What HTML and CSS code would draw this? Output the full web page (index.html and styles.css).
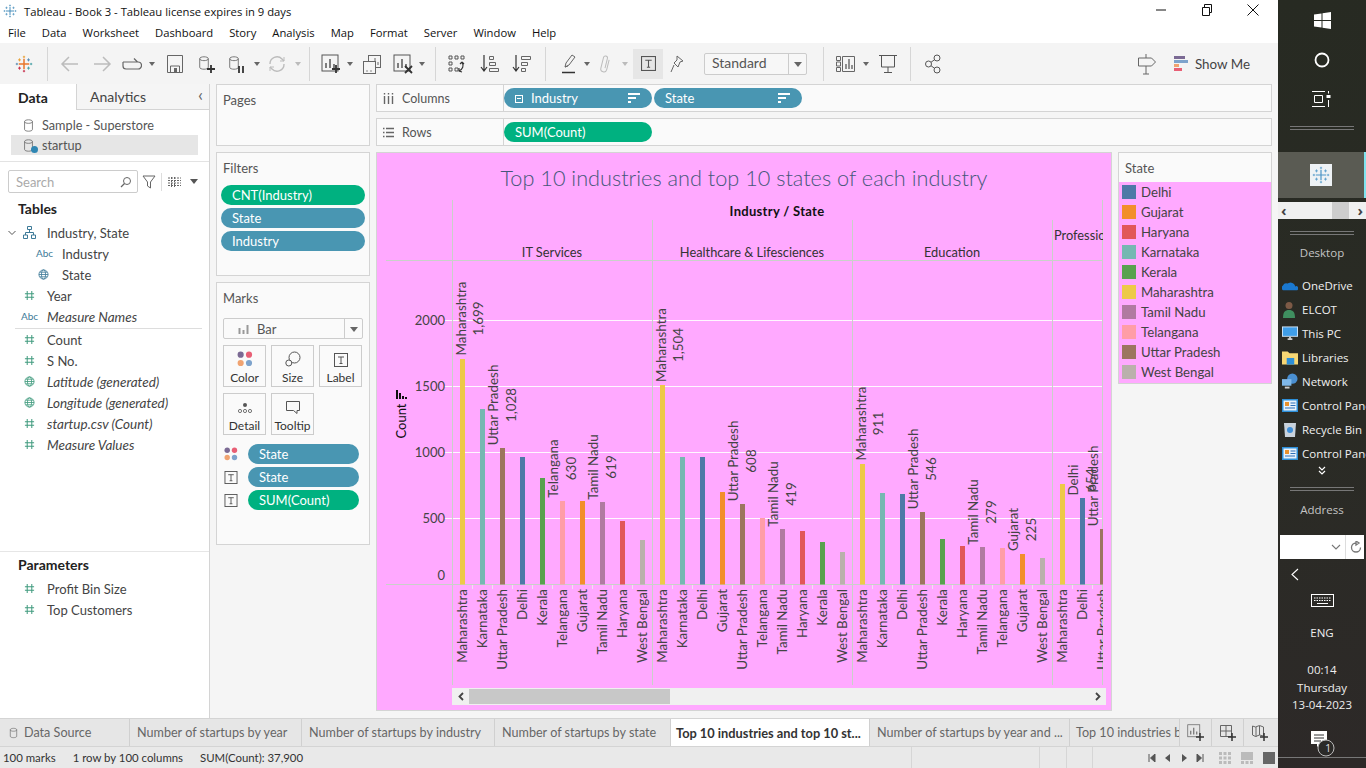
FILE: index.html
```html
<!DOCTYPE html>
<html lang="en">
<head>
<meta charset="utf-8">
<title>Tableau - Book 3</title>
<link rel="stylesheet" href="styles.css">
</head>
<body>
<svg class="defs" width="0" height="0" aria-hidden="true">
  <symbol id="i-db" viewBox="0 0 14 18"><path d="M2 4v10c0 3 10 3 10 0V4M2 4c0-3 10-3 10 0s-10 3-10 0" fill="none" stroke="currentColor"/></symbol>
  <symbol id="i-hash" viewBox="0 0 12 12"><path d="M3.5 1v10M8.5 1v10M1 4h10M1 8h10" fill="none" stroke="#3f9a7d" stroke-width="1.1"/></symbol>
  <symbol id="i-globe" viewBox="0 0 12 12"><g fill="none" stroke="currentColor" stroke-width=".9"><circle cx="6" cy="6" r="5"/><ellipse cx="6" cy="6" rx="2.2" ry="5"/><path d="M1 6h10M1.8 3.5h8.4M1.8 8.5h8.4"/></g></symbol>
  <symbol id="i-t" viewBox="0 0 14 14"><rect x=".5" y=".5" width="13" height="13" fill="none" stroke="#555"/><path d="M4 4h6M7 4v6.500M5.500 10.500h3" fill="none" stroke="#555"/></symbol>
  <symbol id="i-dots" viewBox="0 0 14 14"><circle cx="3.200" cy="3.200" r="2.700" fill="#7b6a94"/><circle cx="10.500" cy="3.200" r="2.700" fill="#e85f75"/><circle cx="3.200" cy="10.500" r="2.700" fill="#f0a371"/><circle cx="10.500" cy="10.500" r="2.700" fill="#7ea3cc"/></symbol>
  <symbol id="i-sort" viewBox="0 0 12 10"><path d="M0 1h12M0 5h8M0 9h3" fill="none" stroke="#fff" stroke-width="2"/></symbol>
  <symbol id="i-plus-mark" viewBox="0 0 24 24"><path d="M12 5v14M5 12h14" stroke="currentColor" stroke-width="1.600"/><path d="M12 1v3M10.500 2.500h3M12 20v3M10.500 21.500h3M1 12h3M2.500 10.500v3M20 12h3M21.500 10.500v3M6 4.500v4M4 6.500h4M18 4.500v4M16 6.500h4M6 15.500v4M4 17.500h4M18 15.500v4M16 17.500h4" stroke="currentColor" stroke-width="1"/></symbol>
  <symbol id="i-logo" viewBox="0 0 24 24"><path d="M12 5v14M5 12h14" stroke="#e8762b" stroke-width="2"/><path d="M12 1v3M10.500 2.500h3M6 4.500v4M4 6.500h4" stroke="#e8a33a" stroke-width="1.300"/><path d="M18 4.500v4M16 6.500h4M1 12h3M2.500 10.500v3" stroke="#5b8fb5" stroke-width="1.300"/><path d="M20 12h3M21.500 10.500v3M18 15.500v4M16 17.500h4" stroke="#4aa3a8" stroke-width="1.300"/><path d="M6 15.500v4M4 17.500h4M12 20v3M10.500 21.500h3" stroke="#c8324f" stroke-width="1.300"/></symbol>
  <symbol id="i-bars" viewBox="0 0 20 20"><rect x="1" y="1" width="16" height="16" fill="none" stroke="currentColor"/><path d="M5 14V9M9 14V5M13 14v-4" stroke="currentColor" stroke-width="1.500"/></symbol>
</svg>

<div class="screen">
<div class="app">
  <header class="titlebar">
    <svg class="title-logo" width="14" height="14"><use href="#i-plus-mark" color="#3d88b8"/></svg>
    <span class="title-text">Tableau - Book 3 - Tableau license expires in 9 days</span>
    <div class="win-controls">
      <svg width="12" height="12" viewBox="0 0 12 12"><path d="M1 6h10" stroke="#111"/></svg>
      <svg width="12" height="12" viewBox="0 0 12 12"><path d="M1.500 3.500h7v8h-7zM3.500 3.500v-3h7v8h-2" fill="none" stroke="#111"/></svg>
      <svg width="12" height="12" viewBox="0 0 12 12"><path d="M.5.500l11 11M11.500.500l-11 11" stroke="#111"/></svg>
    </div>
  </header>
  <nav class="menubar">
    <span>File</span><span>Data</span><span>Worksheet</span><span>Dashboard</span><span>Story</span><span>Analysis</span><span>Map</span><span>Format</span><span>Server</span><span>Window</span><span>Help</span>
  </nav>
  <div class="toolbar">
    <div class="tool w47"><svg width="18" height="18"><use href="#i-logo"/></svg></div>
    <i class="sep"></i>
    <div class="tool w32 lead6 off"><svg width="20" height="20" viewBox="0 0 20 20"><path d="M18 10H3M9 3l-7 7 7 7" fill="none" stroke="currentColor" stroke-width="1.500"/></svg></div>
    <div class="tool w32 off"><svg width="20" height="20" viewBox="0 0 20 20"><path d="M2 10h15M11 3l7 7-7 7" fill="none" stroke="currentColor" stroke-width="1.500"/></svg></div>
    <div class="tool w28"><svg width="20" height="14" viewBox="0 0 20 14"><path d="M1 5h14M12 1.500l3.500 3.500-3.500 0M1 5v4a3 3 0 0 0 3 3h12a3.500 3.500 0 0 0 0-7" fill="none" stroke="#666" stroke-width="1.200"/></svg></div>
    <div class="tool w12 caret"></div>
    <div class="tool w32 lead1"><svg width="16" height="18" viewBox="0 0 16 18"><path d="M.5.500h15v17H.5zM3.500 17v-6h9v6" fill="none" stroke="#666"/><rect x="7" y="13" width="3" height="4" fill="#666"/></svg></div>
    <div class="tool w32"><svg width="18" height="20" viewBox="0 0 18 20"><use href="#i-db" width="12" height="16" x="0" y="1" color="#666"/><path d="M13 11v8M9 15h8" stroke="#333" stroke-width="1.800"/></svg></div>
    <div class="tool w28"><svg width="18" height="20" viewBox="0 0 18 20"><use href="#i-db" width="12" height="16" x="0" y="1" color="#666"/><path d="M11 12v7M15 12v7" stroke="#333" stroke-width="1.800"/></svg></div>
    <div class="tool w12 caret"></div>
    <div class="tool w28 off"><svg width="18" height="18" viewBox="0 0 18 18"><path d="M2 9a7 7 0 0 1 12-5l2 2M16 9a7 7 0 0 1-12 5l-2-2" fill="none" stroke="currentColor" stroke-width="1.400"/><path d="M16 2v4h-4M2 16v-4h4" fill="none" stroke="currentColor"/></svg></div>
    <div class="tool w14 caret off-caret"></div>
    <i class="sep gap4"></i>
    <div class="tool w30 lead6"><svg width="20" height="20"><use href="#i-bars" color="#555"/><path d="M15 11v8M11 15h8" stroke="#333" stroke-width="1.800"/></svg></div>
    <div class="tool w8 caret"></div>
    <div class="tool w36"><svg width="20" height="20" viewBox="0 0 20 20"><rect x="6.500" y="1.500" width="12" height="12" fill="#f5f5f5" stroke="#666"/><path d="M10 11V7M13 11V4M16 11V8" stroke="#666"/><rect x="1.500" y="7.500" width="12" height="12" fill="#f5f5f5" stroke="#666"/><path d="M4 17h2M8 17h2" stroke="#888"/></svg></div>
    <div class="tool w26"><svg width="20" height="20"><use href="#i-bars" color="#555"/><path d="M12 12l7 7M19 12l-7 7" stroke="#333" stroke-width="1.800"/></svg></div>
    <div class="tool w12 caret"></div>
    <i class="sep gap7"></i>
    <div class="tool w32 lead5"><svg width="20" height="20" viewBox="0 0 20 20"><path d="M2 2h3v3H2zM8 2h3v3H8zM14 2h3v3h-3zM2 8h3v3H2zM2 14h3v3H2zM8 14h3v3H8z" fill="none" stroke="#555"/><path d="M15 8c2 4 1 7-3 9M12 14l0 3 3 1M15 8l-2 2M15 8l2 2" fill="none" stroke="#333" stroke-width="1.100"/></svg></div>
    <div class="tool w32 lead1"><svg width="20" height="20" viewBox="0 0 20 20"><path d="M4 1v15M1 13l3 4 3-4" fill="none" stroke="#333" stroke-width="1.200"/><path d="M9.500 2.500h4v3h-4zM9.500 8.500h6v3h-6zM9.500 14.500h9v3h-9z" fill="none" stroke="#666"/></svg></div>
    <div class="tool w32"><svg width="20" height="20" viewBox="0 0 20 20"><path d="M4 1v15M1 13l3 4 3-4" fill="none" stroke="#333" stroke-width="1.200"/><path d="M9.500 2.500h9v3h-9zM9.500 8.500h6v3h-6zM9.500 14.500h4v3h-4z" fill="none" stroke="#666"/></svg></div>
    <i class="sep gap7"></i>
    <div class="tool w28 lead9"><svg width="18" height="20" viewBox="0 0 18 20"><path d="M5 13l1-4 6-8 3 2-6 8zM5 13l3-1" fill="none" stroke="#666"/><path d="M2 18.500h13" stroke="#333" stroke-width="1.500"/></svg></div>
    <div class="tool w8 caret"></div>
    <div class="tool w26 lead1 off"><svg width="12" height="20" viewBox="0 0 12 20"><path d="M9 5v10a3 3 0 0 1-6 0V4a2 2 0 0 1 4 0v10" fill="none" stroke="currentColor" transform="rotate(14 6 10)"/></svg></div>
    <div class="tool w14 caret off-caret"></div>
    <div class="tool t-active"><svg width="15" height="15"><use href="#i-t"/></svg></div>
    <div class="tool w28"><svg width="14" height="18" viewBox="0 0 14 18"><path d="M7 1l6 5-3 1-2 5-4-4 3-3zM4 10l-3 7" fill="none" stroke="#666"/></svg></div>
    <div class="select std"><span>Standard</span><b></b></div>
    <i class="sep gap16"></i>
    <div class="tool w32 lead6"><svg width="20" height="18" viewBox="0 0 20 18"><path d="M.5 1.500h4v4h-4zM.5 7h4v4h-4zM.5 12.500h4v4h-4zM6.500 1.500h12v15h-12z" fill="none" stroke="#666"/><path d="M10 14V9M13 14V4M16 14v-4" stroke="#666" stroke-width="1.400"/></svg></div>
    <div class="tool w8 caret"></div>
    <div class="tool w36"><svg width="18" height="20" viewBox="0 0 18 20"><path d="M0 1.500h18M2.500 2v11h13V2M9 13v5M5 18.500h8" fill="none" stroke="#555"/></svg></div>
    <i class="sep gap4"></i>
    <div class="tool w32 lead6"><svg width="16" height="20" viewBox="0 0 16 20"><g fill="none" stroke="#555"><circle cx="3.500" cy="10" r="3"/><circle cx="12" cy="4" r="3"/><circle cx="12" cy="16" r="3"/><path d="M6 8.300l3.500-2.600M6 11.700l3.500 2.600"/></g></svg></div>
    <div class="tool-right">
      <svg width="18" height="22" viewBox="0 0 18 22"><path d="M.5 5h13l4 4-4 4H.5zM8 1v4M8 13v8M5 21h6" fill="none" stroke="#666"/></svg>
      <div class="showme">
        <svg width="14" height="16" viewBox="0 0 14 16"><rect width="11" height="3" fill="#7b6a94"/><rect y="4" width="14" height="3" fill="#7ea3cc"/><rect y="8" width="5" height="3" fill="#f0a371"/><rect y="12" width="8" height="3" fill="#e85f75"/></svg>
        <span>Show Me</span>
      </div>
    </div>
  </div>

  <main class="main">
    <aside class="sidebar">
      <div class="side-tabs">
        <div class="side-tab on">Data</div>
        <div class="side-tab">Analytics<span class="chev">&#8249;</span></div>
      </div>
      <div class="sources">
        <div class="source"><svg width="11" height="15"><use href="#i-db" color="#666"/></svg><span>Sample - Superstore</span></div>
        <div class="source on"><svg width="11" height="15"><use href="#i-db" color="#666"/></svg><i class="check"></i><span>startup</span></div>
      </div>
      <div class="search-row">
        <div class="search"><span>Search</span><svg width="12" height="12" viewBox="0 0 12 12"><circle cx="7" cy="5" r="3.500" fill="none" stroke="#666"/><path d="M4.500 7.500L1 11" stroke="#666" stroke-width="1.200"/></svg></div>
        <svg class="funnel" width="14" height="14" viewBox="0 0 14 14"><path d="M1 1h12L8.500 7v6l-3-2V7z" fill="none" stroke="#666"/></svg>
        <i class="search-sep"></i>
        <svg class="listic" width="13" height="10" viewBox="0 0 13 10"><path d="M0 1h13M0 3.500h13M0 6h13M0 8.500h13M3.500 0v10M6.500 0v10" stroke="#666" stroke-dasharray="2 1"/></svg>
        <i class="caret-d"></i>
      </div>
      <h3 class="side-head">Tables</h3>
      <div class="field top"><svg class="fold" width="8" height="6" viewBox="0 0 8 6"><path d="M.5 1L4 4.500 7.500 1" fill="none" stroke="#555"/></svg><svg class="f-ic" width="13" height="13" viewBox="0 0 13 13"><path d="M4.500.500h4v3h-4zM.500 9h4v3.500h-4zM8.500 9h4v3.500h-4zM6.500 3.500V6.500M2.500 9V6.500h8V9" fill="none" stroke="#3d7a98"/></svg><span>Industry, State</span></div>
      <div class="field sub"><span class="abc">Abc</span><span>Industry</span></div>
      <div class="field sub"><svg class="f-ic globe-b" width="11" height="11"><use href="#i-globe"/></svg><span>State</span></div>
      <div class="field"><svg class="f-ic" width="11" height="11"><use href="#i-hash"/></svg><span>Year</span></div>
      <div class="field em"><span class="abc">Abc</span><span>Measure Names</span></div>
      <div class="divider"></div>
      <div class="field"><svg class="f-ic" width="11" height="11"><use href="#i-hash"/></svg><span>Count</span></div>
      <div class="field"><svg class="f-ic" width="11" height="11"><use href="#i-hash"/></svg><span>S No.</span></div>
      <div class="field em"><svg class="f-ic globe-g" width="11" height="11"><use href="#i-globe"/></svg><span>Latitude (generated)</span></div>
      <div class="field em"><svg class="f-ic globe-g" width="11" height="11"><use href="#i-globe"/></svg><span>Longitude (generated)</span></div>
      <div class="field em"><svg class="f-ic" width="11" height="11"><use href="#i-hash"/></svg><span>startup.csv (Count)</span></div>
      <div class="field em"><svg class="f-ic" width="11" height="11"><use href="#i-hash"/></svg><span>Measure Values</span></div>
      <div class="params">
        <h3 class="side-head">Parameters</h3>
        <div class="field"><svg class="f-ic" width="11" height="11"><use href="#i-hash"/></svg><span>Profit Bin Size</span></div>
        <div class="field"><svg class="f-ic" width="11" height="11"><use href="#i-hash"/></svg><span>Top Customers</span></div>
      </div>
    </aside>

    <div class="cards">
      <section class="card pages"><h4>Pages</h4></section>
      <section class="card filters">
        <h4>Filters</h4>
        <div class="pill green">CNT(Industry)</div>
        <div class="pill blue">State</div>
        <div class="pill blue">Industry</div>
      </section>
      <section class="card marks">
        <h4>Marks</h4>
        <div class="select mark-type"><svg width="12" height="10" viewBox="0 0 12 10"><path d="M1.500 4v6M5.500 6v4M9.500 1v9" stroke="#999" stroke-width="2"/></svg><span>Bar</span><b></b></div>
        <div class="mark-grid">
          <div class="mark-btn"><svg width="16" height="16"><use href="#i-dots"/></svg><span>Color</span></div>
          <div class="mark-btn"><svg width="16" height="16" viewBox="0 0 16 16"><circle cx="9.500" cy="6.500" r="5.500" fill="none" stroke="#555"/><circle cx="3.800" cy="12" r="3" fill="#fafafa" stroke="#555"/></svg><span>Size</span></div>
          <div class="mark-btn"><svg width="14" height="14"><use href="#i-t"/></svg><span>Label</span></div>
          <div class="mark-btn"><svg width="16" height="14" viewBox="0 0 16 14"><circle cx="8" cy="4" r="2" fill="#555"/><g fill="none" stroke="#555" stroke-width=".8"><circle cx="3" cy="10" r="1.600"/><circle cx="8" cy="10" r="1.600"/><circle cx="13" cy="10" r="1.600"/></g></svg><span>Detail</span></div>
          <div class="mark-btn"><svg width="16" height="14" viewBox="0 0 16 14"><path d="M1.500.500h13v9H12v3l-3.500-3h-7z" fill="none" stroke="#555"/></svg><span>Tooltip</span></div>
        </div>
        <div class="mark-pill"><svg width="14" height="14"><use href="#i-dots"/></svg><div class="pill blue">State</div></div>
        <div class="mark-pill"><svg width="13" height="13"><use href="#i-t"/></svg><div class="pill blue">State</div></div>
        <div class="mark-pill"><svg width="13" height="13"><use href="#i-t"/></svg><div class="pill green">SUM(Count)</div></div>
      </section>
    </div>

    <div class="content">
      <div class="shelf">
        <div class="shelf-label"><svg width="11" height="11" viewBox="0 0 11 11"><path d="M1.500 3v8M5.500 3v8M9.500 3v8M1.500 0v1.500M5.500 0v1.500M9.500 0v1.500" stroke="#666" stroke-width="1.400"/></svg><span>Columns</span></div>
        <div class="pill blue shelf-pill"><i class="minus"></i>Industry<svg class="sorter" width="12" height="10"><use href="#i-sort"/></svg></div>
        <div class="pill blue shelf-pill">State<svg class="sorter" width="12" height="10"><use href="#i-sort"/></svg></div>
      </div>
      <div class="shelf">
        <div class="shelf-label"><svg width="11" height="11" viewBox="0 0 11 11"><path d="M0 1.500h1.500M3 1.500h8M0 5.500h1.500M3 5.500h8M0 9.500h1.500M3 9.500h8" stroke="#666" stroke-width="1.400"/></svg><span>Rows</span></div>
        <div class="pill green shelf-pill">SUM(Count)</div>
      </div>
      <div class="stage">
        <div class="view">
          <svg class="chart" width="736" height="559" viewBox="376 152 736 559">
            <defs><clipPath id="pane"><rect x="376" y="152" width="727" height="533"/></clipPath></defs>
            <text class="c-title" x="744" y="186">Top 10 industries and top 10 states of each industry</text>
            <g class="grid">
              <path d="M444 320.500h659M444 386.500h659M444 452.500h659M444 518.500h659"/>
            </g>
            <g class="rules">
              <path d="M386 260.500h717M386 584.500h717M452.500 200v485M1102.500 200v485M652.500 220v465M852.500 220v465M1052.500 220v465"/>
              <path class="ticks" d="M472.500 585v4M492.500 585v4M512.500 585v4M532.500 585v4M552.500 585v4M572.500 585v4M592.500 585v4M612.500 585v4M632.500 585v4M672.500 585v4M692.500 585v4M712.500 585v4M732.500 585v4M752.500 585v4M772.500 585v4M792.500 585v4M812.500 585v4M832.500 585v4M872.500 585v4M892.500 585v4M912.500 585v4M932.500 585v4M952.500 585v4M972.500 585v4M992.500 585v4M1012.500 585v4M1032.500 585v4M1072.500 585v4M1092.500 585v4"/>
            </g>
            <text class="c-head b" x="777" y="216">Industry / State</text>
            <text class="c-head" x="552" y="257">IT Services</text>
            <text class="c-head" x="752" y="257">Healthcare &amp; Lifesciences</text>
            <text class="c-head" x="952" y="257">Education</text>
            <g clip-path="url(#pane)"><text class="c-head start" x="1054" y="240">Professional &amp; Commercial Services</text></g>

            <text class="c-tick" x="445" y="325">2000</text>
            <text class="c-tick" x="445" y="391">1500</text>
            <text class="c-tick" x="445" y="457">1000</text>
            <text class="c-tick" x="445" y="523">500</text>
            <text class="c-tick" x="445" y="580">0</text>
            <text class="c-axis" transform="translate(406,421) rotate(-90)">Count</text>
            <path class="c-sort" d="M397 390v9M400 393v6M403 396v3M406 397v2"/>

            <g class="bars">
              <rect class="mh" x="460" y="359" width="5" height="225.500"/><rect class="ka" x="480" y="409" width="5" height="175.500"/><rect class="up" x="500" y="448" width="5" height="136.500"/><rect class="dl" x="520" y="457" width="5" height="127.500"/><rect class="kl" x="540" y="478" width="5" height="106.500"/><rect class="tg" x="560" y="501" width="5" height="83.500"/><rect class="gj" x="580" y="501" width="5" height="83.500"/><rect class="tn" x="600" y="502" width="5" height="82.500"/><rect class="hr" x="620" y="521" width="5" height="63.500"/><rect class="wb" x="640" y="540" width="5" height="44.500"/>
              <rect class="mh" x="660" y="385" width="5" height="199.500"/><rect class="ka" x="680" y="457" width="5" height="127.500"/><rect class="dl" x="700" y="457" width="5" height="127.500"/><rect class="gj" x="720" y="492" width="5" height="92.500"/><rect class="up" x="740" y="504" width="5" height="80.500"/><rect class="tg" x="760" y="518" width="5" height="66.500"/><rect class="tn" x="780" y="529" width="5" height="55.500"/><rect class="hr" x="800" y="531" width="5" height="53.500"/><rect class="kl" x="820" y="542" width="5" height="42.500"/><rect class="wb" x="840" y="552" width="5" height="32.500"/>
              <rect class="mh" x="860" y="464" width="5" height="120.500"/><rect class="ka" x="880" y="493" width="5" height="91.500"/><rect class="dl" x="900" y="494" width="5" height="90.500"/><rect class="up" x="920" y="512" width="5" height="72.500"/><rect class="kl" x="940" y="539" width="5" height="45.500"/><rect class="hr" x="960" y="546" width="5" height="38.500"/><rect class="tn" x="980" y="547" width="5" height="37.500"/><rect class="tg" x="1000" y="548" width="5" height="36.500"/><rect class="gj" x="1020" y="554" width="5" height="30.500"/><rect class="wb" x="1040" y="558" width="5" height="26.500"/>
              <rect class="mh" x="1060" y="484" width="5" height="100.500"/><rect class="dl" x="1080" y="498" width="5" height="86.500"/><rect class="up" x="1100" y="529" width="3" height="55.500"/>
            </g>

            <g class="c-lab" clip-path="url(#pane)">
              <text transform="translate(465.500,318.500) rotate(-90)">Maharashtra</text><text transform="translate(482.500,318.500) rotate(-90)">1,699</text>
              <text transform="translate(498,405) rotate(-90)">Uttar Pradesh</text><text transform="translate(515.500,405) rotate(-90)">1,028</text>
              <text transform="translate(558,468.500) rotate(-90)">Telangana</text><text transform="translate(575.500,468.500) rotate(-90)">630</text>
              <text transform="translate(598,467) rotate(-90)">Tamil Nadu</text><text transform="translate(615.500,467) rotate(-90)">619</text>
              <text transform="translate(665.500,345) rotate(-90)">Maharashtra</text><text transform="translate(682.500,345) rotate(-90)">1,504</text>
              <text transform="translate(738,461) rotate(-90)">Uttar Pradesh</text><text transform="translate(755.500,461) rotate(-90)">608</text>
              <text transform="translate(778,494) rotate(-90)">Tamil Nadu</text><text transform="translate(795.500,494) rotate(-90)">419</text>
              <text transform="translate(865.500,423.500) rotate(-90)">Maharashtra</text><text transform="translate(882.500,423.500) rotate(-90)">911</text>
              <text transform="translate(918,469) rotate(-90)">Uttar Pradesh</text><text transform="translate(935.500,469) rotate(-90)">546</text>
              <text transform="translate(978,512) rotate(-90)">Tamil Nadu</text><text transform="translate(995.500,512) rotate(-90)">279</text>
              <text transform="translate(1018,529.500) rotate(-90)">Gujarat</text><text transform="translate(1035.500,529.500) rotate(-90)">225</text>
              <text transform="translate(1078,480) rotate(-90)">Delhi</text><text transform="translate(1095.500,480) rotate(-90)">654</text>
              <text transform="translate(1098,486) rotate(-90)">Uttar Pradesh</text>
            </g>

            <g class="c-cat" clip-path="url(#pane)">
              <text transform="translate(466.500,589) rotate(-90)">Maharashtra</text><text transform="translate(486.500,589) rotate(-90)">Karnataka</text><text transform="translate(506.500,589) rotate(-90)">Uttar Pradesh</text><text transform="translate(526.500,589) rotate(-90)">Delhi</text><text transform="translate(546.500,589) rotate(-90)">Kerala</text><text transform="translate(566.500,589) rotate(-90)">Telangana</text><text transform="translate(586.500,589) rotate(-90)">Gujarat</text><text transform="translate(606.500,589) rotate(-90)">Tamil Nadu</text><text transform="translate(626.500,589) rotate(-90)">Haryana</text><text transform="translate(646.500,589) rotate(-90)">West Bengal</text>
              <text transform="translate(666.500,589) rotate(-90)">Maharashtra</text><text transform="translate(686.500,589) rotate(-90)">Karnataka</text><text transform="translate(706.500,589) rotate(-90)">Delhi</text><text transform="translate(726.500,589) rotate(-90)">Gujarat</text><text transform="translate(746.500,589) rotate(-90)">Uttar Pradesh</text><text transform="translate(766.500,589) rotate(-90)">Telangana</text><text transform="translate(786.500,589) rotate(-90)">Tamil Nadu</text><text transform="translate(806.500,589) rotate(-90)">Haryana</text><text transform="translate(826.500,589) rotate(-90)">Kerala</text><text transform="translate(846.500,589) rotate(-90)">West Bengal</text>
              <text transform="translate(866.500,589) rotate(-90)">Maharashtra</text><text transform="translate(886.500,589) rotate(-90)">Karnataka</text><text transform="translate(906.500,589) rotate(-90)">Delhi</text><text transform="translate(926.500,589) rotate(-90)">Uttar Pradesh</text><text transform="translate(946.500,589) rotate(-90)">Kerala</text><text transform="translate(966.500,589) rotate(-90)">Haryana</text><text transform="translate(986.500,589) rotate(-90)">Tamil Nadu</text><text transform="translate(1006.500,589) rotate(-90)">Telangana</text><text transform="translate(1026.500,589) rotate(-90)">Gujarat</text><text transform="translate(1046.500,589) rotate(-90)">West Bengal</text>
              <text transform="translate(1066.500,589) rotate(-90)">Maharashtra</text><text transform="translate(1086.500,589) rotate(-90)">Delhi</text><text transform="translate(1106.500,589) rotate(-90)">Uttar Pradesh</text>
            </g>

            <rect class="sb-track" x="452" y="688" width="654" height="17"/>
            <rect class="sb-thumb" x="469" y="689" width="201" height="15"/>
            <path class="sb-arrow" d="M463 693l-3.500 3.500 3.500 3.500M1096 693l3.500 3.500-3.500 3.500"/>
          </svg>
        </div>
        <div class="legend">
          <div class="legend-head">State</div>
          <ul class="legend-list">
            <li><i class="sw dl-bg"></i>Delhi</li>
            <li><i class="sw gj-bg"></i>Gujarat</li>
            <li><i class="sw hr-bg"></i>Haryana</li>
            <li><i class="sw ka-bg"></i>Karnataka</li>
            <li><i class="sw kl-bg"></i>Kerala</li>
            <li><i class="sw mh-bg"></i>Maharashtra</li>
            <li><i class="sw tn-bg"></i>Tamil Nadu</li>
            <li><i class="sw tg-bg"></i>Telangana</li>
            <li><i class="sw up-bg"></i>Uttar Pradesh</li>
            <li><i class="sw wb-bg"></i>West Bengal</li>
          </ul>
        </div>
      </div>
    </div>
  </main>

  <div class="tabbar">
    <div class="tab ds"><svg width="9" height="12"><use href="#i-db" color="#666"/></svg>Data Source</div>
    <div class="tab t172">Number of startups by year</div>
    <div class="tab t193">Number of startups by industry</div>
    <div class="tab t176">Number of startups by state</div>
    <div class="tab t199 active">Top 10 industries and top 10 st...</div>
    <div class="tab t200">Number of startups by year and ...</div>
    <div class="tab t110">Top 10 industries by year and state</div>
    <div class="tab-add"><svg width="18" height="18"><use href="#i-bars" color="#666" width="15" height="15"/><path d="M13 9v8M9 13h8" stroke="#333" stroke-width="1.500"/></svg></div>
    <div class="tab-add"><svg width="18" height="18" viewBox="0 0 18 18"><path d="M1.500 1.500h11v11h-11zM7 1.500v11M1.500 7h11" fill="none" stroke="#666"/><path d="M13 9v8M9 13h8" stroke="#333" stroke-width="1.500"/></svg></div>
    <div class="tab-add"><svg width="18" height="18" viewBox="0 0 18 18"><path d="M1.500 2l3 1 4-1.500 4 1.500v9l-4-1-4 1.500-3-1.500zM5 3v10M8.500 2v9" fill="none" stroke="#666"/><path d="M13 9v8M9 13h8" stroke="#333" stroke-width="1.500"/></svg></div>
  </div>
  <footer class="statusbar">
    <span class="st-a">100 marks</span><span class="st-b">1 row by 100 columns</span><span class="st-c">SUM(Count): 37,900</span>
    <div class="st-cells"><i class="c1"></i><i class="c2"></i><i class="c3"></i><i class="c4"></i></div>
    <div class="st-nav">
      <svg width="8" height="8" viewBox="0 0 8 8"><path d="M1 0v8M7 0v8L2.500 4z" stroke="#555" fill="#555"/></svg>
      <svg width="8" height="8" viewBox="0 0 8 8"><path d="M6 0v8L1 4z" fill="#555"/></svg>
      <svg width="8" height="8" viewBox="0 0 8 8"><path d="M2 0v8l5-4z" fill="#555"/></svg>
      <svg width="8" height="8" viewBox="0 0 8 8"><path d="M7 0v8M1 0v8l4.500-4z" stroke="#555" fill="#555"/></svg>
    </div>
    <div class="st-view">
      <svg width="12" height="12" viewBox="0 0 12 12"><path d="M0 1.500h12M0 6h12M0 10.500h12" stroke="#bbb" stroke-width="3" stroke-dasharray="3 1.500"/></svg>
      <svg width="12" height="12" viewBox="0 0 12 12"><rect width="12" height="8" fill="#bbb"/><path d="M0 10.500h12" stroke="#bbb" stroke-width="3" stroke-dasharray="3 1.500"/></svg>
      <svg width="12" height="12" viewBox="0 0 12 12"><rect width="12" height="12" fill="#666"/></svg>
    </div>
  </footer>
</div>

<aside class="taskbar">
  <div class="tk-slot s40"><svg width="17" height="17" viewBox="0 0 17 17"><path d="M0 2.500l7.500-1v6.500H0zM8.500 1.300L17 0v8H8.500zM0 9h7.500v6.500l-7.500-1zM8.500 9H17v8l-8.500-1.300z" fill="#fff"/></svg></div>
  <div class="tk-slot s40"><svg width="16" height="16" viewBox="0 0 16 16"><circle cx="8" cy="8" r="6.500" fill="none" stroke="#fff" stroke-width="1.800"/></svg></div>
  <div class="tk-slot s38"><svg width="20" height="16" viewBox="0 0 20 16"><path d="M0 .500h13M0 15.500h13M2.500 4.500h8v7h-8zM16.500 0v2.500M16.500 9v7" fill="none" stroke="#fff"/><rect x="14.500" y="4" width="4" height="3" fill="#fff"/></svg></div>
  <div class="tk-lines t-8"></div>
  <div class="tk-active"><div class="tk-app"><svg width="18" height="18"><use href="#i-plus-mark" color="#4e95c7"/></svg></div></div>
  <div class="tk-scroll"><span>&#8249;</span><i></i><span>&#8250;</span></div>
  <div class="tk-lines t-12"></div>
  <div class="tk-title desktop">Desktop</div>
  <div class="tk-items">
    <div class="tk-item"><svg width="17" height="12" viewBox="0 0 17 12"><path d="M1 11.500a3 3 0 0 1 0-5 4 4 0 0 1 5-2 5 5 0 0 1 8 3 2.200 2.200 0 0 1 2 4z" fill="#1a78cf"/></svg><span>OneDrive</span></div>
    <div class="tk-item"><svg width="16" height="17" viewBox="0 0 16 17"><circle cx="7" cy="4.500" r="3.500" fill="#7d5a46"/><path d="M1 17c0-6 2-8 6-8s6 2 6 8z" fill="#3f8f5f"/></svg><span>ELCOT</span></div>
    <div class="tk-item"><svg width="17" height="15" viewBox="0 0 17 15"><rect width="17" height="11" fill="#cfe4f7"/><rect x="1" y="1" width="15" height="9" fill="#3f9ee8"/><path d="M6 13.500h5M8.500 11v2" stroke="#ccc" stroke-width="2"/></svg><span>This PC</span></div>
    <div class="tk-item"><svg width="17" height="15" viewBox="0 0 17 15"><path d="M0 1h6l2 2h9v12H0z" fill="#f7d774"/><rect x="5" y="8" width="8" height="7" fill="#2d8fd8"/></svg><span>Libraries</span></div>
    <div class="tk-item"><svg width="17" height="16" viewBox="0 0 17 16"><circle cx="11" cy="5.500" r="5.500" fill="#4a8fd0"/><rect x="0" y="6" width="10" height="7" fill="#7fb8e8"/><path d="M3 15h5" stroke="#ccc" stroke-width="2"/></svg><span>Network</span></div>
    <div class="tk-item"><svg width="16" height="13" viewBox="0 0 16 13"><rect width="16" height="13" fill="#2d8fd8"/><rect x="1.500" y="1.500" width="13" height="10" fill="#e8f2fb"/><rect x="3" y="3" width="4" height="4" fill="#e8912d"/><path d="M8.500 4h5M8.500 6.500h5M3 9h10" stroke="#2d6fb8"/></svg><span>Control Panel</span></div>
    <div class="tk-item"><svg width="14" height="16" viewBox="0 0 14 16"><path d="M1 2h12l-1 14H2z" fill="#c9d3dc"/><circle cx="7" cy="9" r="3" fill="#3f8fd8"/></svg><span>Recycle Bin</span></div>
    <div class="tk-item"><svg width="16" height="13" viewBox="0 0 16 13"><rect width="16" height="13" fill="#2d8fd8"/><rect x="1.500" y="1.500" width="13" height="10" fill="#e8f2fb"/><rect x="3" y="3" width="4" height="4" fill="#e8912d"/><path d="M8.500 4h5M8.500 6.500h5M3 9h10" stroke="#2d6fb8"/></svg><span>Control Panel</span></div>
  </div>
  <div class="tk-more"><svg width="8" height="9" viewBox="0 0 8 9"><path d="M1 1l3 3 3-3M1 5l3 3 3-3" fill="none" stroke="#fff" stroke-width="1.200"/></svg></div>
  <div class="tk-lines t-12b"></div>
  <div class="tk-title address">Address</div>
  <div class="tk-input"><svg width="10" height="6" viewBox="0 0 10 6"><path d="M1 1l4 4 4-4" fill="none" stroke="#777" stroke-width="1.100"/></svg><i></i><svg width="12" height="12" viewBox="0 0 12 12"><path d="M6 2a4.500 4.500 0 1 0 4.500 4.500M6 0v4l3-2z" fill="none" stroke="#777" stroke-width="1.300"/></svg></div>
  <div class="tk-slot back"><svg width="8" height="13" viewBox="0 0 8 13"><path d="M7 1L1 6.500 7 12" fill="none" stroke="#fff" stroke-width="1.100"/></svg></div>
  <div class="tk-slot kb"><svg width="23" height="13" viewBox="0 0 23 13"><rect x=".5" y=".5" width="22" height="12" fill="none" stroke="#fff"/><path d="M3 4h17M3 6.500h17" stroke="#fff" stroke-dasharray="1.500 1"/><path d="M6 9.500h11" stroke="#fff"/></svg></div>
  <div class="tk-eng">ENG</div>
  <div class="tk-clock"><div>00:14</div><div>Thursday</div><div>13-04-2023</div></div>
  <div class="tk-note"><svg width="26" height="26" viewBox="0 0 26 26"><path d="M2 0h16v13h-7l-3 3v-3H2z" fill="#fff"/><path d="M5 4h10M5 7h10M5 10h7" stroke="#333"/><circle cx="17" cy="17" r="8" fill="#2b2a28" stroke="#bbb"/></svg><span>1</span></div>
  <div class="tk-foot"></div>
</aside>
</div>
</body>
</html>
```

FILE: styles.css
```css
*{box-sizing:border-box}
html,body{margin:0;padding:0;height:768px;overflow:hidden}
body{font-family:"Lato","Open Sans",sans-serif;font-size:12.5px;color:#333;background:#f5f5f5}
.defs{position:absolute}
.screen{display:flex;width:1366px;height:768px}
.app{width:1278px;height:768px;display:flex;flex-direction:column;background:#f5f5f5}

.titlebar{height:22px;flex:none;background:#fff;display:flex;align-items:center;padding-left:3px;font-family:"Open Sans",sans-serif;font-size:11.25px;color:#111}
.title-logo{margin-right:7px}
.win-controls{margin-left:auto;display:flex;gap:34px;padding-right:19px;margin-top:-2px}
.menubar{height:21px;flex:none;background:#fff;display:flex;align-items:center;gap:16px;padding-left:8px;font-family:"Open Sans",sans-serif;font-size:11.25px;color:#111}

.toolbar{height:41px;flex:none;display:flex;align-items:center;background:#f4f4f4}
.tool{display:flex;align-items:center;justify-content:center;height:30px;flex:none;color:#666}
.off{color:#bcbcbc}
.w8{width:8px}.w12{width:12px}.w14{width:14px}.w26{width:26px}.w28{width:28px}.w30{width:30px}.w32{width:32px}.w36{width:36px}.w47{width:47px}
.lead1{margin-left:1px}.lead5{margin-left:5px}.lead6{margin-left:6px}.lead9{margin-left:9px}
.caret::after{content:"";border:3px solid transparent;border-top:4px solid #666;border-bottom:0}
.off-caret::after{border-top-color:#bbb}
.sep{width:1px;height:34px;background:#d6d6d6;flex:none}
.gap4{margin-left:4px}.gap7{margin-left:7px}.gap16{margin-left:16px}
.t-active{width:30px;background:#e6e6e6;margin-left:1px}
.select{height:22px;background:#f7f7f7;border:1px solid #ccc;border-radius:2px;display:flex;align-items:center;position:relative;flex:none}
.select b{position:absolute;right:0;top:0;bottom:0;width:18px;border-left:1px solid #ccc}
.select b::after{content:"";position:absolute;left:5px;top:8px;border:4px solid transparent;border-top:5px solid #666;border-bottom:0}
.std{width:103px;margin-left:13px;padding-left:7px;padding-bottom:2px;font-size:14px;color:#555}
.tool-right{margin-left:auto;display:flex;align-items:center;gap:18px;padding-right:28px}
.showme{display:flex;align-items:center;gap:7px;font-size:13.4px;color:#444}

.main{height:634px;display:flex;flex:none}
.sidebar{width:210px;height:634px;background:#fff;border-right:1px solid #d4d4d4;flex:none;font-size:13px;color:#444}
.side-tabs{display:flex;height:26px}
.side-tab{font-size:14px;display:flex;align-items:center;position:relative;flex:1;background:#f5f5f5;border-bottom:1px solid #d4d4d4;padding-left:13px;color:#444}
.side-tab.on{flex:none;width:77px;background:#fff;border:0;border-right:1px solid #d4d4d4;padding-left:18px;font-weight:700;color:#222}
.chev{position:absolute;right:6px;top:-1px;font-size:18px;color:#666}
.sources{height:52px;padding-top:5px;border-bottom:1px solid #e3e3e3;position:relative}
.source{height:20px;display:flex;align-items:center;padding-left:23px;gap:8px;position:relative;font-size:12.7px;color:#555}
.source.on{background:#e6e6e6;margin:0 11px;padding-left:12px}
.check{position:absolute;left:20px;top:11px;width:7px;height:7px;border-radius:50%;background:#2f86b3}
.search-row{height:36px;display:flex;align-items:center;padding:3px 0 0 8px;position:relative}
.search{width:130px;height:23px;border:1px solid #ccc;border-radius:2px;display:flex;align-items:center;justify-content:space-between;padding:0 5px 0 7px;color:#aaa;font-size:13px}
.funnel{margin-left:4px}
.search-sep{width:1px;height:18px;background:#ddd;margin:0 6px 0 5px}
.listic{flex:none}
.caret-d{margin-left:9px;border:4px solid transparent;border-top:5px solid #555;border-bottom:0}
.side-head{margin:0;font-size:14px;font-weight:700;color:#222;height:24px;line-height:22px;padding-left:18px}
.field{height:21px;display:flex;align-items:center;position:relative;padding-left:47px;white-space:nowrap}
.field.em{font-style:italic;font-size:13.5px}
.field.sub{padding-left:62px}
.f-ic{position:absolute;left:24px;top:5px;color:#3f9a7d}
.sub .f-ic{left:38px}
.top .f-ic{left:23px;top:4px}
.fold{position:absolute;left:8px;top:8px}
.globe-b{color:#3d7a98}
.globe-g{color:#3f9a7d}
.abc{position:absolute;left:21px;top:0;line-height:21px;font-size:10px;font-style:normal;color:#3d7a98}
.sub .abc{left:36px}
.divider{height:1px;background:#ddd;margin:1px 7px 0 15px}
.params{margin-top:96px;border-top:1px solid #e6e6e6;padding-top:2px}
.params .side-head{height:22px;margin-bottom:2px}

.cards{width:154px;margin-left:6px;flex:none;display:flex;flex-direction:column;gap:6px}
.card{background:#fafafa;border:1px solid #d4d4d4;padding:0 4px}
.card h4{margin:0;font-size:13px;font-weight:400;color:#555;height:31px;line-height:31px;padding-left:2px}
.pages{height:62px}
.filters{height:124px}
.filters h4{height:32px;line-height:30px}
.filters .pill{margin-bottom:3px}
.marks{height:263px;padding:0 6px}
.marks h4{height:35px;line-height:31px;padding-left:0}
.pill{height:20px;border-radius:10px;color:#fff;font-size:13px;line-height:20px;padding-left:11px;position:relative;white-space:nowrap}
.blue{background:#4996b2}
.green{background:#00b180}
.mark-type{width:140px;height:21px;padding-left:14px;gap:7px;font-size:13px;color:#555;background:#fafafa}
.mark-grid{display:grid;grid-template-columns:43px 43px 43px;gap:6px 5px;margin-top:6px;margin-bottom:9px}
.mark-btn{height:42px;border:1px solid #ccc;display:flex;flex-direction:column;align-items:center;justify-content:flex-end;gap:3px;font-size:12px;color:#333;padding-bottom:1px}
.mark-pill{display:flex;align-items:center;height:20px;margin-bottom:3px}
.mark-pill svg{width:14px;margin-left:1px;flex:none}
.mark-pill .pill{width:111px;margin-left:10px}

.content{width:896px;margin-left:6px;flex:none}
.shelf{height:28px;background:#fafafa;border:1px solid #d4d4d4;display:flex;align-items:center;margin-bottom:6px}
.shelf-label{width:127px;height:26px;border-right:1px solid #d4d4d4;display:flex;align-items:center;gap:8px;padding-left:6px;font-size:12.5px;color:#555;flex:none}
.shelf-pill{width:148px;margin-right:2px;flex:none}
.minus{display:inline-block;width:8px;height:8px;border:1px solid #fff;margin-right:8px;position:relative}
.minus::after{content:"";position:absolute;left:1px;right:1px;top:2px;height:1px;background:#fff}
.sorter{position:absolute;right:12px;top:5px}
.stage{display:flex;align-items:flex-start;gap:6px}
.view{width:736px;height:559px;background:#ffa9ff;flex:none;outline:1px solid #d4d4d4;outline-offset:-1px}
.chart{display:block}
.c-title{font-family:"Lato",sans-serif;font-weight:300;font-size:21.7px;fill:#46587a;text-anchor:middle}
.grid path{stroke:#fff;stroke-opacity:.9;fill:none}
.rules path{stroke:#c9d0c9;fill:none}
.rules .ticks{stroke:#f0e4f0}
.c-head{font-size:12.8px;fill:#333;text-anchor:middle}
.c-head.b{font-weight:700;fill:#111;font-size:13px;letter-spacing:.3px}
.c-head.start{text-anchor:start}
.c-tick{font-size:13px;fill:#444;text-anchor:end}
.c-axis{font-size:13px;fill:#111;text-anchor:middle}
.c-sort{stroke:#111;stroke-width:2}
.c-lab text{font-size:13.4px;fill:#444;text-anchor:middle}
.c-cat text{font-size:13.4px;fill:#444;text-anchor:end}
.mh{fill:#edc948}.ka{fill:#76b7b2}.up{fill:#9c755f}.dl{fill:#4e79a7}.kl{fill:#59a14f}.tg{fill:#ff9da7}.gj{fill:#f28e2b}.tn{fill:#b07aa1}.hr{fill:#e15759}.wb{fill:#bab0ac}
.sb-track{fill:#f0f0f0}
.sb-thumb{fill:#c8c8c8}
.sb-arrow{fill:none;stroke:#444;stroke-width:1.800}

.legend{width:154px;height:232px;background:#ffa9ff;border:1px solid #d4d4d4;flex:none}
.legend-head{height:29px;background:#fafafa;line-height:30px;padding-left:6px;font-size:13px;color:#555}
.legend-list{list-style:none;margin:0;padding:0}
.legend-list li{height:20px;display:flex;align-items:center;gap:5px;padding-left:3px;font-size:13.2px;color:#444}
.sw{width:14px;height:14px;flex:none}
.mh-bg{background:#edc948}.ka-bg{background:#76b7b2}.up-bg{background:#9c755f}.dl-bg{background:#4e79a7}.kl-bg{background:#59a14f}.tg-bg{background:#ff9da7}.gj-bg{background:#f28e2b}.tn-bg{background:#b07aa1}.hr-bg{background:#e15759}.wb-bg{background:#bab0ac}

.tabbar{height:29px;background:#e6e6e6;border-top:1px solid #d4d4d4;border-bottom:1px solid #d4d4d4;display:flex;flex:none;font-size:12.6px;color:#666}
.tab{height:27px;display:flex;align-items:center;padding-left:7px;border-right:1px solid #d0d0d0;white-space:nowrap;overflow:hidden;flex:none}
.ds{width:130px;gap:6px;padding-left:9px}
.t172{width:172px}.t193{width:193px}.t176{width:176px}.t199{width:199px}.t200{width:200px}.t110{width:110px;padding-left:6px}
.active{background:#fff;color:#333;font-weight:700;font-size:12.8px;padding-left:5px}
.tab-add{width:32px;height:27px;display:flex;align-items:center;justify-content:center;border-right:1px solid #d0d0d0;flex:none}
.tab-add:last-child{border:0}
.statusbar{height:21px;background:#e9e9e9;display:flex;align-items:center;font-size:11.4px;color:#333;position:relative;flex:none}
.st-a{margin-left:3px}.st-b{margin-left:17px}.st-c{margin-left:17px}
.st-cells{position:absolute;left:911px;top:0;width:230px;height:21px}
.st-cells i{position:absolute;top:0;width:1px;height:21px;background:#d6d6d6}
.c1{left:0}.c2{left:128px}.c3{left:155px}.c4{left:181px}
.st-nav{position:absolute;left:1148px;top:7px;display:flex;gap:8px}
.st-nav svg{display:block}
.st-view{position:absolute;left:1219px;top:5px;display:flex;gap:10px}
.st-view svg{display:block}

.taskbar{width:88px;height:768px;background:linear-gradient(170deg,#272a22,#2a2b25 55%,#2d2928);flex:none;color:#eee;font-family:"Open Sans",sans-serif;font-size:11.5px;overflow:hidden}
.tk-slot{display:flex;align-items:center;justify-content:center}
.s40{height:40px}.s38{height:38px}
.tk-lines{height:4px;margin:0 12px;border-top:1px solid #777;border-bottom:1px solid #777}
.t-8{margin-top:8px;margin-bottom:22px}
.tk-active{height:46px;background:#5a5b53;border-right:2px solid #7fe3ee;display:flex;align-items:center;justify-content:center}
.tk-app{width:22px;height:22px;background:#eef2f5;display:flex;align-items:center;justify-content:center}
.tk-scroll{margin-top:4px;height:17px;background:#f0f0f0;display:flex;align-items:center;color:#444;font-size:15px;font-weight:700;line-height:17px;position:relative;padding:0 3px;justify-content:space-between}
.tk-scroll i{position:absolute;left:54px;top:0;width:17px;height:17px;background:#cdcdcd}
.t-12{margin-top:12px}
.tk-title{text-align:center;color:#c4c4c4;height:20px;line-height:20px}
.desktop{margin-top:8px;margin-bottom:10px}
.tk-items{height:192px;overflow:hidden}
.tk-item{height:24px;display:flex;align-items:center;gap:4px;padding-left:4px;white-space:nowrap;color:#f0f0f0}
.tk-item svg{width:16px;flex:none}
.tk-more{height:10px;display:flex;justify-content:center;align-items:center;margin-bottom:12px}
.address{margin-top:9px}
.tk-input{margin:15px 2px 0;height:24px;background:#fff;display:flex;align-items:center;justify-content:flex-end;gap:4px;padding-right:2px}
.tk-input i{width:1px;height:24px;background:#ddd}
.back{height:20px;margin-top:5px;justify-content:flex-start;padding-left:13px}
.kb{height:20px;margin-top:6px}
.tk-eng{text-align:center;margin-top:13px;height:20px;line-height:20px}
.tk-clock{text-align:center;margin-top:18px;line-height:17.500px}
.tk-note{margin-top:17px;height:26px;position:relative;display:flex;justify-content:center}
.tk-note span{position:absolute;left:47px;top:9px;font-size:11px;color:#ddd}
.tk-foot{height:1px;background:#777}
```
